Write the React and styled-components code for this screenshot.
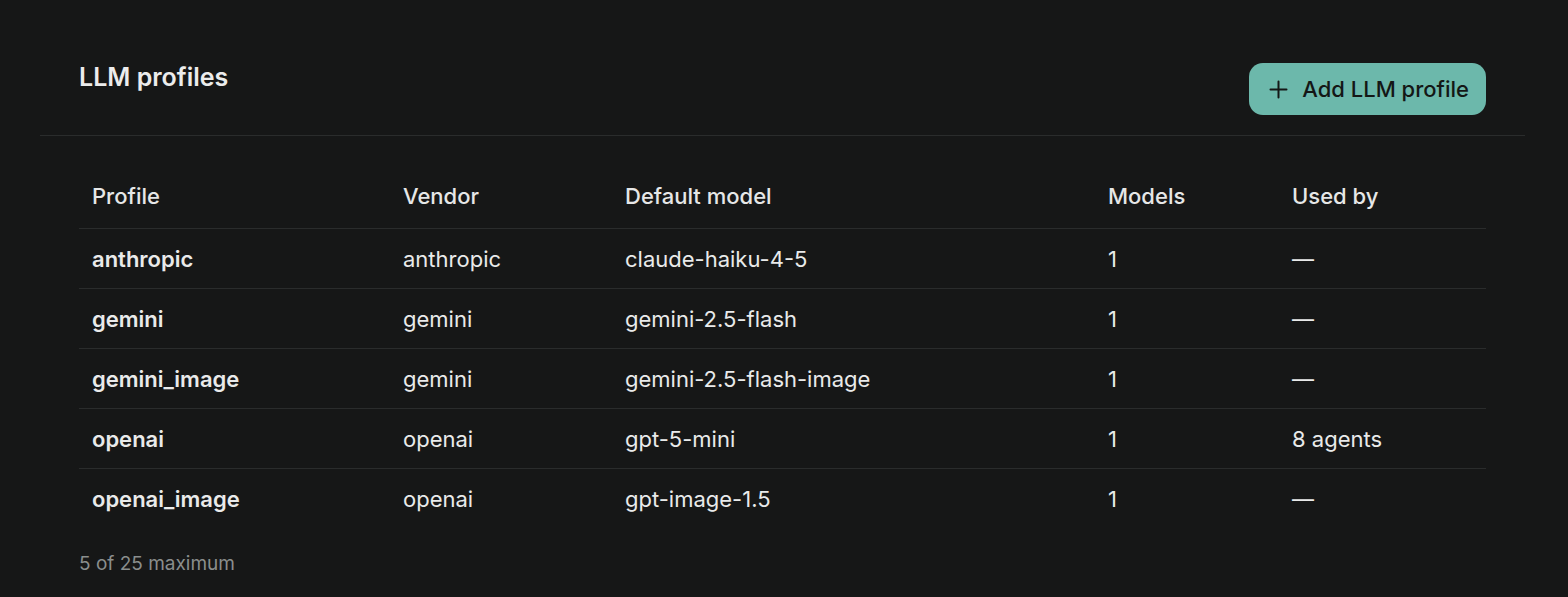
import React from 'react';
import styled, { createGlobalStyle } from 'styled-components';

const profiles = [
  { name: 'anthropic', vendor: 'anthropic', model: 'claude-haiku-4-5', models: 1, usedBy: '—' },
  { name: 'gemini', vendor: 'gemini', model: 'gemini-2.5-flash', models: 1, usedBy: '—' },
  { name: 'gemini_image', vendor: 'gemini', model: 'gemini-2.5-flash-image', models: 1, usedBy: '—' },
  { name: 'openai', vendor: 'openai', model: 'gpt-5-mini', models: 1, usedBy: '8 agents' },
  { name: 'openai_image', vendor: 'openai', model: 'gpt-image-1.5', models: 1, usedBy: '—' },
];

const PlusIcon = () => (
  <svg width="19" height="19" viewBox="0 0 19 19" fill="none" stroke="currentColor" strokeWidth="2" strokeLinecap="round">
    <path d="M9.5 1.5v16M1.5 9.5h16" />
  </svg>
);

const App = () => (
  <>
    <GlobalStyle />
    <Page>
      <SectionHeader>
        <Title>LLM profiles</Title>
        <AddButton type="button">
          <PlusIcon />
          Add LLM profile
        </AddButton>
      </SectionHeader>

      <Body>
        <Table>
          <colgroup>
            <col style={{ width: 311 }} />
            <col style={{ width: 222 }} />
            <col style={{ width: 483 }} />
            <col style={{ width: 184 }} />
            <col />
          </colgroup>
          <thead>
            <tr>
              <HeadCell>Profile</HeadCell>
              <HeadCell>Vendor</HeadCell>
              <HeadCell>Default model</HeadCell>
              <HeadCell>Models</HeadCell>
              <HeadCell>Used by</HeadCell>
            </tr>
          </thead>
          <tbody>
            {profiles.map((p) => (
              <Row key={p.name}>
                <Cell $strong>{p.name}</Cell>
                <Cell>{p.vendor}</Cell>
                <Cell>{p.model}</Cell>
                <Cell>{p.models}</Cell>
                <Cell>{p.usedBy}</Cell>
              </Row>
            ))}
          </tbody>
        </Table>
        <Footnote>5 of 25 maximum</Footnote>
      </Body>
    </Page>
  </>
);

const GlobalStyle = createGlobalStyle`
  html, body {
    margin: 0;
    background: #161717;
    color: #e9eaea;
    font-family: Inter, 'Noto Sans', sans-serif;
    -webkit-font-smoothing: antialiased;
  }
`;

const Page = styled.div`
  padding: 0 43px 0 40px;
  min-height: 597px;
  box-sizing: border-box;
`;

const SectionHeader = styled.header`
  display: flex;
  justify-content: space-between;
  align-items: flex-start;
  padding: 61px 39px 20px;
  border-bottom: 1px solid #2a2c2c;
`;

const Title = styled.h2`
  margin: 0;
  font-size: 25px;
  font-weight: 600;
  line-height: 32px;
  color: #ececec;
`;

const AddButton = styled.button`
  display: inline-flex;
  align-items: center;
  gap: 14px;
  height: 52px;
  margin-top: 2px;
  padding: 0 17px 0 20px;
  border: none;
  border-radius: 14px;
  background: #6cb8ab;
  color: #141716;
  font-family: inherit;
  font-size: 22px;
  font-weight: 500;
  cursor: pointer;
`;

const Body = styled.div`
  padding: 27px 39px 0;
`;

const Table = styled.table`
  width: 100%;
  border-collapse: collapse;
  table-layout: fixed;
`;

const HeadCell = styled.th`
  text-align: left;
  font-size: 22px;
  font-weight: 500;
  color: #e6e7e7;
  height: 65px;
  padding: 0 13px;
  border-bottom: 1px solid #2a2c2c;
`;

const Row = styled.tr`
  & + & td {
    border-top: 1px solid #2a2c2c;
  }
`;

const Cell = styled.td`
  height: 59px;
  padding: 0 13px;
  font-size: 22px;
  font-weight: ${(p) => (p.$strong ? 600 : 400)};
  color: #e9eaea;
`;

const Footnote = styled.p`
  margin: 24px 0 0;
  font-size: 19px;
  color: #8a8e8d;
`;

export default App;
